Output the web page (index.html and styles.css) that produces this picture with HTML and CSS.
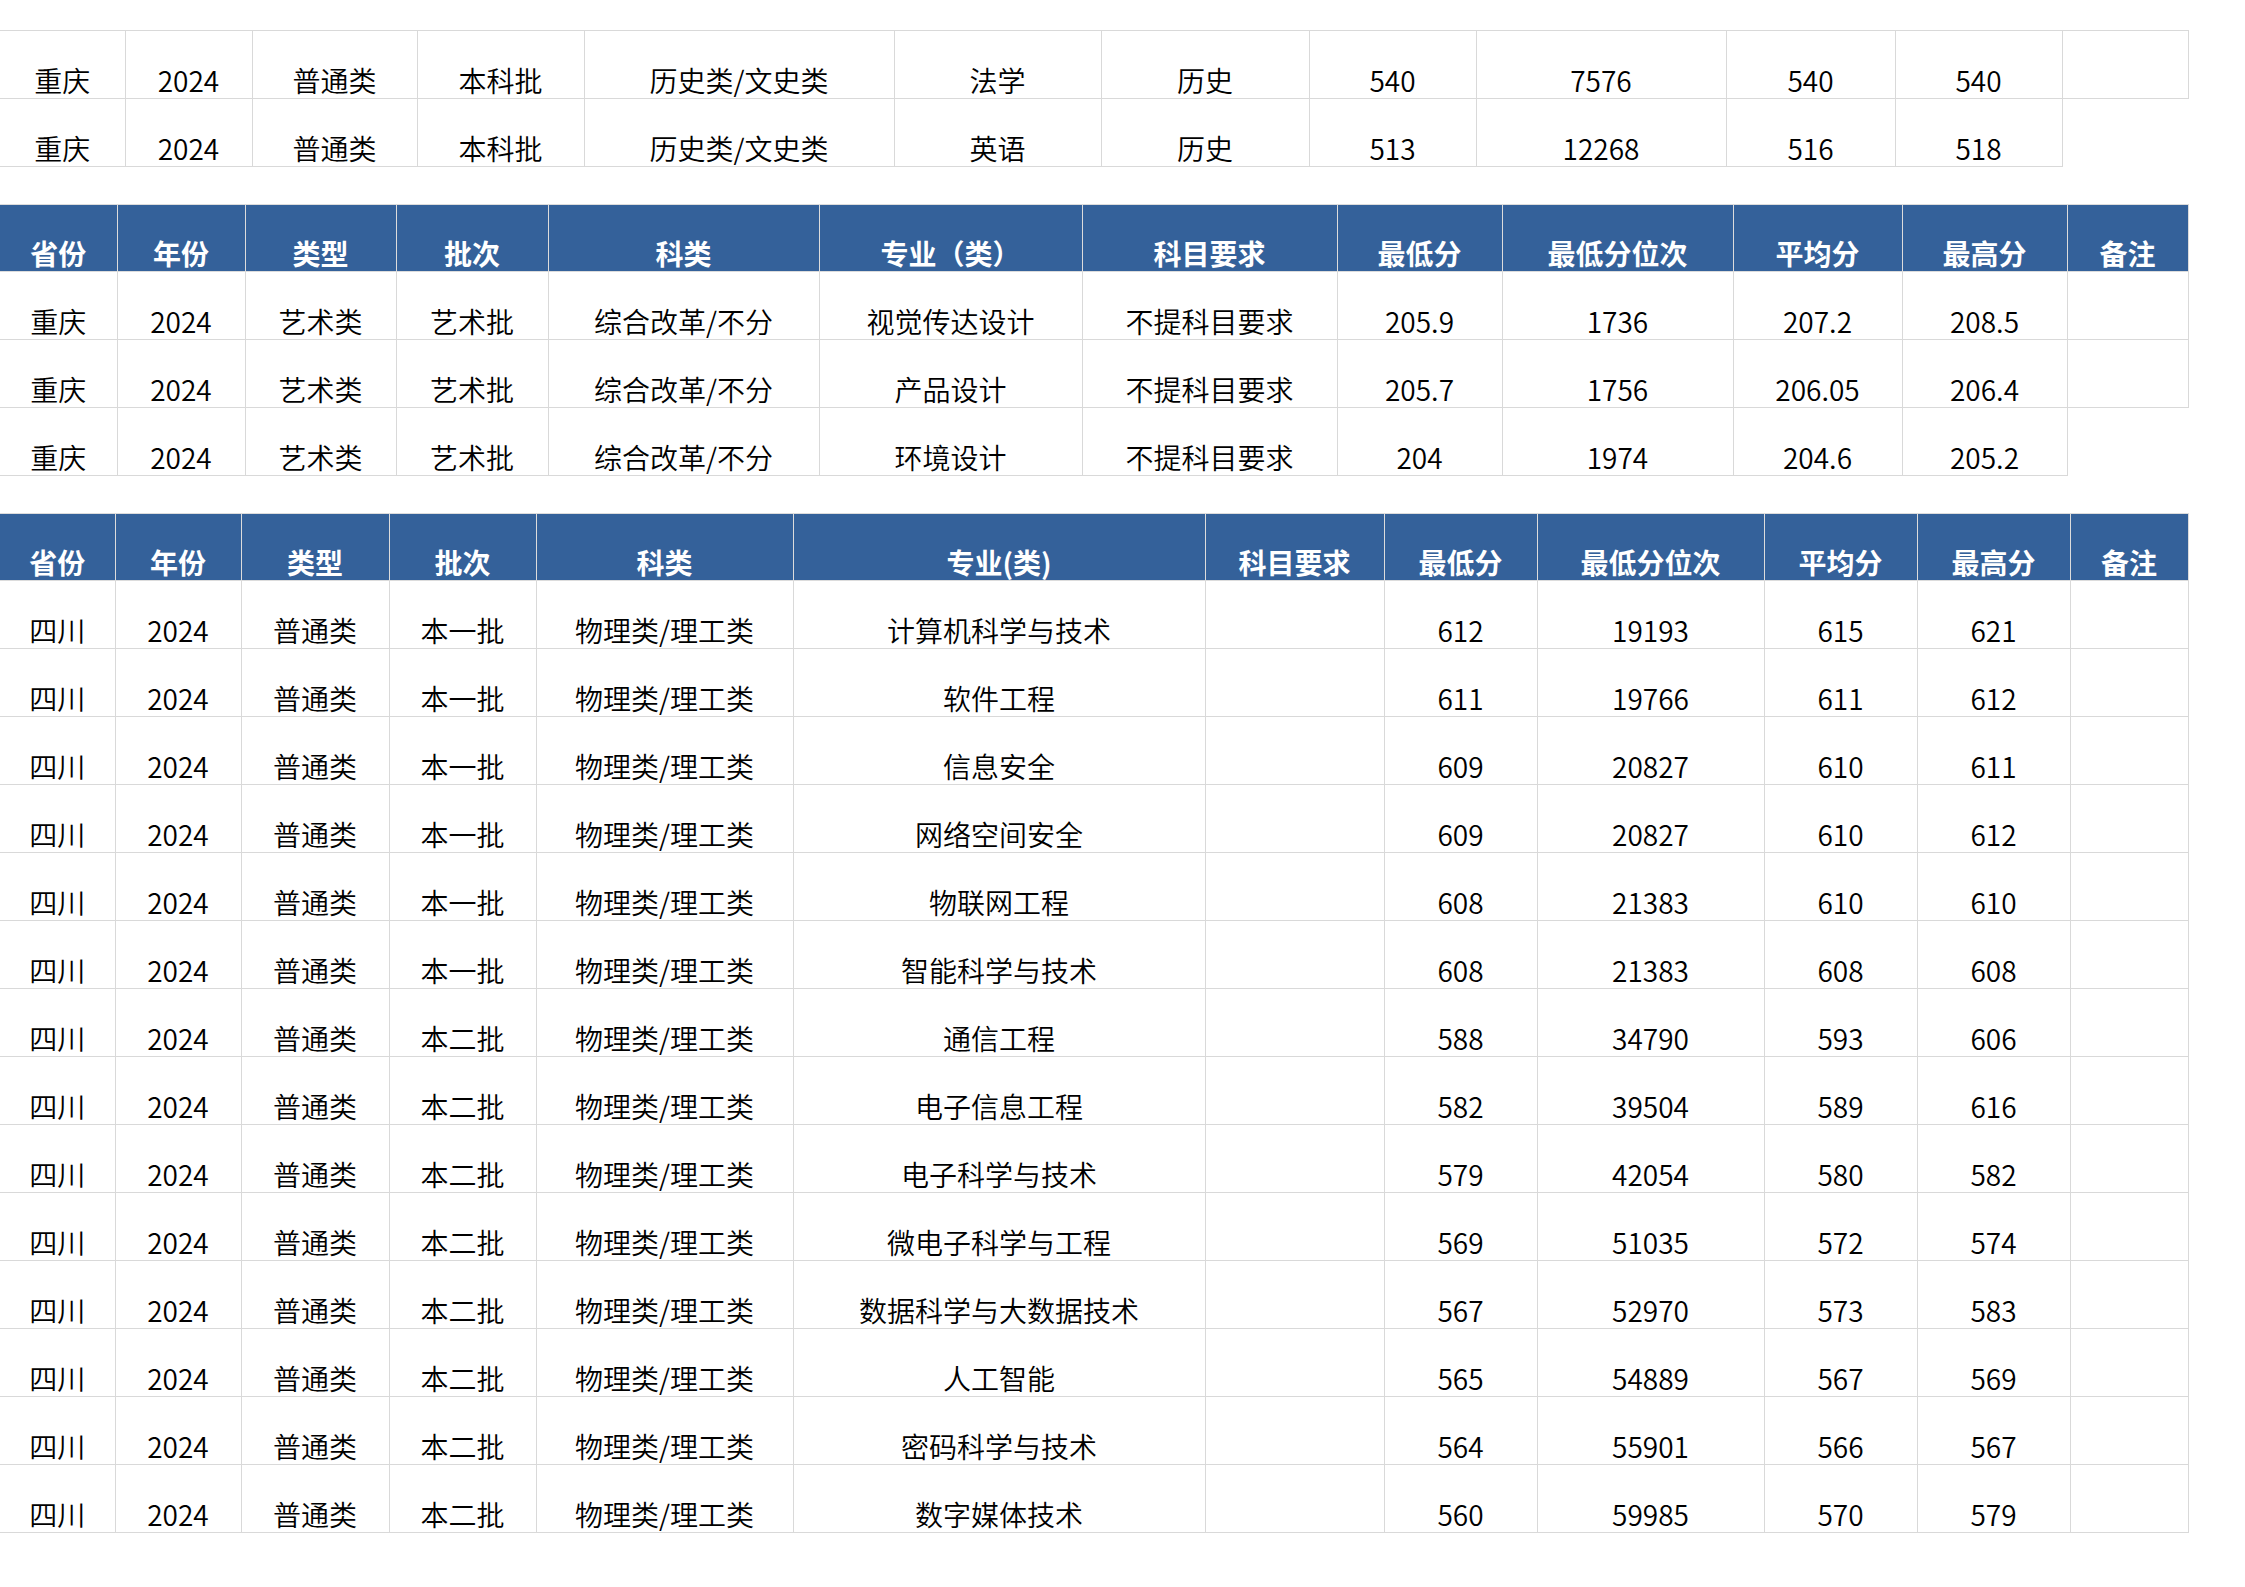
FILE: index.html
```html
<!DOCTYPE html>
<html lang="zh-CN">
<head>
<meta charset="utf-8">
<title>录取分数</title>
<link rel="stylesheet" href="styles.css">
</head>
<body>
<div class="sheet">
<table class="grid t1">
<colgroup><col class="c125"><col class="c127"><col class="c165"><col class="c167"><col class="c310"><col class="c207"><col class="c208"><col class="c167"><col class="c250"><col class="c169"><col class="c167"><col class="c126"></colgroup>
<tbody>
<tr class="row"><td>重庆</td><td>2024</td><td>普通类</td><td>本科批</td><td>历史类/文史类</td><td>法学</td><td>历史</td><td>540</td><td>7576</td><td>540</td><td>540</td><td></td></tr>
<tr class="row"><td>重庆</td><td>2024</td><td>普通类</td><td>本科批</td><td>历史类/文史类</td><td>英语</td><td>历史</td><td>513</td><td>12268</td><td>516</td><td>518</td></tr>
</tbody>
</table>

<table class="grid t2">
<colgroup><col class="c117"><col class="c128"><col class="c151"><col class="c152"><col class="c271"><col class="c263"><col class="c255"><col class="c165"><col class="c231"><col class="c169"><col class="c165"><col class="c121"></colgroup>
<thead>
<tr class="head"><th>省份</th><th>年份</th><th>类型</th><th>批次</th><th>科类</th><th>专业（类）</th><th>科目要求</th><th>最低分</th><th>最低分位次</th><th>平均分</th><th>最高分</th><th>备注</th></tr>
</thead>
<tbody>
<tr class="row"><td>重庆</td><td>2024</td><td>艺术类</td><td>艺术批</td><td>综合改革/不分</td><td>视觉传达设计</td><td>不提科目要求</td><td>205.9</td><td>1736</td><td>207.2</td><td>208.5</td><td></td></tr>
<tr class="row"><td>重庆</td><td>2024</td><td>艺术类</td><td>艺术批</td><td>综合改革/不分</td><td>产品设计</td><td>不提科目要求</td><td>205.7</td><td>1756</td><td>206.05</td><td>206.4</td><td></td></tr>
<tr class="row"><td>重庆</td><td>2024</td><td>艺术类</td><td>艺术批</td><td>综合改革/不分</td><td>环境设计</td><td>不提科目要求</td><td>204</td><td>1974</td><td>204.6</td><td>205.2</td></tr>
</tbody>
</table>

<table class="grid t3">
<colgroup><col class="c115"><col class="c126"><col class="c148"><col class="c147"><col class="c257"><col class="c412"><col class="c179"><col class="c153"><col class="c227"><col class="c153"><col class="c153"><col class="c118"></colgroup>
<thead>
<tr class="head"><th>省份</th><th>年份</th><th>类型</th><th>批次</th><th>科类</th><th>专业(类)</th><th>科目要求</th><th>最低分</th><th>最低分位次</th><th>平均分</th><th>最高分</th><th>备注</th></tr>
</thead>
<tbody>
<tr class="row"><td>四川</td><td>2024</td><td>普通类</td><td>本一批</td><td>物理类/理工类</td><td>计算机科学与技术</td><td></td><td>612</td><td>19193</td><td>615</td><td>621</td><td></td></tr>
<tr class="row"><td>四川</td><td>2024</td><td>普通类</td><td>本一批</td><td>物理类/理工类</td><td>软件工程</td><td></td><td>611</td><td>19766</td><td>611</td><td>612</td><td></td></tr>
<tr class="row"><td>四川</td><td>2024</td><td>普通类</td><td>本一批</td><td>物理类/理工类</td><td>信息安全</td><td></td><td>609</td><td>20827</td><td>610</td><td>611</td><td></td></tr>
<tr class="row"><td>四川</td><td>2024</td><td>普通类</td><td>本一批</td><td>物理类/理工类</td><td>网络空间安全</td><td></td><td>609</td><td>20827</td><td>610</td><td>612</td><td></td></tr>
<tr class="row"><td>四川</td><td>2024</td><td>普通类</td><td>本一批</td><td>物理类/理工类</td><td>物联网工程</td><td></td><td>608</td><td>21383</td><td>610</td><td>610</td><td></td></tr>
<tr class="row"><td>四川</td><td>2024</td><td>普通类</td><td>本一批</td><td>物理类/理工类</td><td>智能科学与技术</td><td></td><td>608</td><td>21383</td><td>608</td><td>608</td><td></td></tr>
<tr class="row"><td>四川</td><td>2024</td><td>普通类</td><td>本二批</td><td>物理类/理工类</td><td>通信工程</td><td></td><td>588</td><td>34790</td><td>593</td><td>606</td><td></td></tr>
<tr class="row"><td>四川</td><td>2024</td><td>普通类</td><td>本二批</td><td>物理类/理工类</td><td>电子信息工程</td><td></td><td>582</td><td>39504</td><td>589</td><td>616</td><td></td></tr>
<tr class="row"><td>四川</td><td>2024</td><td>普通类</td><td>本二批</td><td>物理类/理工类</td><td>电子科学与技术</td><td></td><td>579</td><td>42054</td><td>580</td><td>582</td><td></td></tr>
<tr class="row"><td>四川</td><td>2024</td><td>普通类</td><td>本二批</td><td>物理类/理工类</td><td>微电子科学与工程</td><td></td><td>569</td><td>51035</td><td>572</td><td>574</td><td></td></tr>
<tr class="row"><td>四川</td><td>2024</td><td>普通类</td><td>本二批</td><td>物理类/理工类</td><td>数据科学与大数据技术</td><td></td><td>567</td><td>52970</td><td>573</td><td>583</td><td></td></tr>
<tr class="row"><td>四川</td><td>2024</td><td>普通类</td><td>本二批</td><td>物理类/理工类</td><td>人工智能</td><td></td><td>565</td><td>54889</td><td>567</td><td>569</td><td></td></tr>
<tr class="row"><td>四川</td><td>2024</td><td>普通类</td><td>本二批</td><td>物理类/理工类</td><td>密码科学与技术</td><td></td><td>564</td><td>55901</td><td>566</td><td>567</td><td></td></tr>
<tr class="row"><td>四川</td><td>2024</td><td>普通类</td><td>本二批</td><td>物理类/理工类</td><td>数字媒体技术</td><td></td><td>560</td><td>59985</td><td>570</td><td>579</td><td></td></tr>
</tbody>
</table>
</div>
</body>
</html>
```

FILE: styles.css
```css
html, body {
  margin: 0;
  padding: 0;
  background: #ffffff;
}

body {
  font-family: "Noto Sans CJK SC", "Noto Sans", sans-serif;
  color: #000000;
}

.sheet {
  padding-top: 30px;
  display: flex;
  flex-direction: column;
  gap: 37px;
  align-items: flex-start;
}

.grid {
  border-collapse: collapse;
  table-layout: fixed;
  width: 2188px;
}

.grid td,
.grid th {
  border: 1px solid #d9d9d9;
  text-align: center;
  vertical-align: bottom;
  padding: 0 0 4px 0;
  font-size: 28px;
  line-height: 28px;
  white-space: nowrap;
  overflow: hidden;
}

.grid td {
  font-weight: 350;
}

.grid td:first-child,
.grid th:first-child {
  border-left: none;
}

.row {
  height: 68px;
}

.head {
  height: 67px;
}

.grid th {
  background: #34619a;
  color: #ffffff;
  font-weight: bold;
  border-color: #dcdcdc;
}

/* column widths */
.c115 { width: 115px; }
.c117 { width: 117px; }
.c118 { width: 118px; }
.c121 { width: 121px; }
.c125 { width: 125px; }
.c126 { width: 126px; }
.c127 { width: 127px; }
.c128 { width: 128px; }
.c147 { width: 147px; }
.c148 { width: 148px; }
.c151 { width: 151px; }
.c152 { width: 152px; }
.c153 { width: 153px; }
.c165 { width: 165px; }
.c167 { width: 167px; }
.c169 { width: 169px; }
.c179 { width: 179px; }
.c207 { width: 207px; }
.c208 { width: 208px; }
.c227 { width: 227px; }
.c231 { width: 231px; }
.c250 { width: 250px; }
.c255 { width: 255px; }
.c257 { width: 257px; }
.c263 { width: 263px; }
.c271 { width: 271px; }
.c310 { width: 310px; }
.c412 { width: 412px; }
```
